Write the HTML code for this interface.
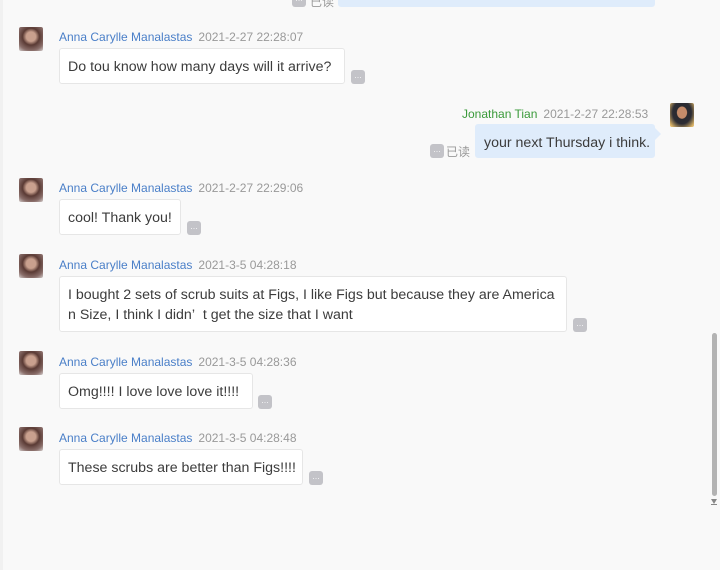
<!DOCTYPE html>
<html><head><meta charset="utf-8"><style>
*{margin:0;padding:0;box-sizing:border-box}
body{width:720px;height:570px;background:#f9f9f9;position:relative;overflow:hidden;font-family:"Liberation Sans","Noto Sans CJK SC",sans-serif}
.lb{position:absolute;left:0;top:0;width:3px;height:570px;background:#f1f1f1}
.av{position:absolute;width:24px;height:24px;border-radius:2px;background:radial-gradient(circle at 50% 40%,#c9a08e 0 25%,#5a3a34 45%,#8a6e6a 75%,#d6d0cf 100%)}
.av.j{background:radial-gradient(ellipse at 50% 40%,#c58b6a 0 28%,#2a2a30 32%,#2c2c34 55%,#e0b86a 90%)}
.nm{position:absolute;font-size:12px;color:#4a7fc8;white-space:nowrap}
.nm span{color:#999;margin-left:6px}
.nm.g{color:#3a9a3a}
.b{position:absolute;background:#fff;border:1px solid #e6e6e6;border-radius:3px;font-size:14.2px;color:#3c3c3c;padding:0 8px;line-height:20px;padding-top:8px;white-space:nowrap}
.b.r{background:#dfecfb;border-color:#dfecfb}
.d{position:absolute;width:14px;height:14px;border-radius:3px;background:#c3c3c8;color:#fff;font-size:8px;text-align:center;line-height:12px}
.rd{position:absolute;font-size:12px;color:#999}
</style></head><body>
<div class="lb"></div>
<div class="d" style="left:292px;top:-7px">…</div><div class="rd" style="left:310px;top:-7px">已读</div>
<div class="b r" style="left:338px;top:-20px;width:317px;height:27px"></div>

<div class="av" style="left:19px;top:27px"></div>
<div class="nm" style="left:59px;top:30px">Anna Carylle Manalastas<span>2021-2-27 22:28:07</span></div>
<div class="b" style="left:59px;top:48px;width:286px;height:36px">Do tou know how many days will it arrive?</div>
<div class="d" style="left:351px;top:70px">…</div>

<div class="av j" style="left:670px;top:103px"></div>
<div class="nm g" style="left:462px;top:107px">Jonathan Tian<span>2021-2-27 22:28:53</span></div>
<div class="b r" style="left:475px;top:124px;width:180px;height:34px;padding-top:8px">your next Thursday i think.</div>
<div style="position:absolute;left:655px;top:128px;border-left:6px solid #dfecfb;border-top:6px solid transparent;border-bottom:6px solid transparent"></div>
<div class="d" style="left:430px;top:144px">…</div><div class="rd" style="left:446px;top:143px">已读</div>

<div class="av" style="left:19px;top:178px"></div>
<div class="nm" style="left:59px;top:181px">Anna Carylle Manalastas<span>2021-2-27 22:29:06</span></div>
<div class="b" style="left:59px;top:199px;width:122px;height:36px">cool! Thank you!</div>
<div class="d" style="left:187px;top:221px">…</div>

<div class="av" style="left:19px;top:254px"></div>
<div class="nm" style="left:59px;top:258px">Anna Carylle Manalastas<span>2021-3-5 04:28:18</span></div>
<div class="b" style="left:59px;top:276px;width:508px;height:56px">I bought 2 sets of scrub suits at Figs, I like Figs but because they are America<br>n Size, I think I didn’&nbsp;&nbsp;t get the size that I want</div>
<div class="d" style="left:573px;top:318px">…</div>

<div class="av" style="left:19px;top:351px"></div>
<div class="nm" style="left:59px;top:355px">Anna Carylle Manalastas<span>2021-3-5 04:28:36</span></div>
<div class="b" style="left:59px;top:373px;width:194px;height:36px">Omg!!!! I love love love it!!!!</div>
<div class="d" style="left:258px;top:395px">…</div>

<div class="av" style="left:19px;top:427px"></div>
<div class="nm" style="left:59px;top:431px">Anna Carylle Manalastas<span>2021-3-5 04:28:48</span></div>
<div class="b" style="left:59px;top:449px;width:244px;height:36px">These scrubs are better than Figs!!!!</div>
<div class="d" style="left:309px;top:471px">…</div>

<div style="position:absolute;left:712px;top:333px;width:5px;height:163px;border-radius:3px;background:#b3b3b3"></div>
<div style="position:absolute;left:711px;top:499px;border-top:5px solid #888;border-left:3px solid transparent;border-right:3px solid transparent"></div>
<div style="position:absolute;left:711px;top:504px;width:6px;height:1px;background:#888"></div>
</body></html>
